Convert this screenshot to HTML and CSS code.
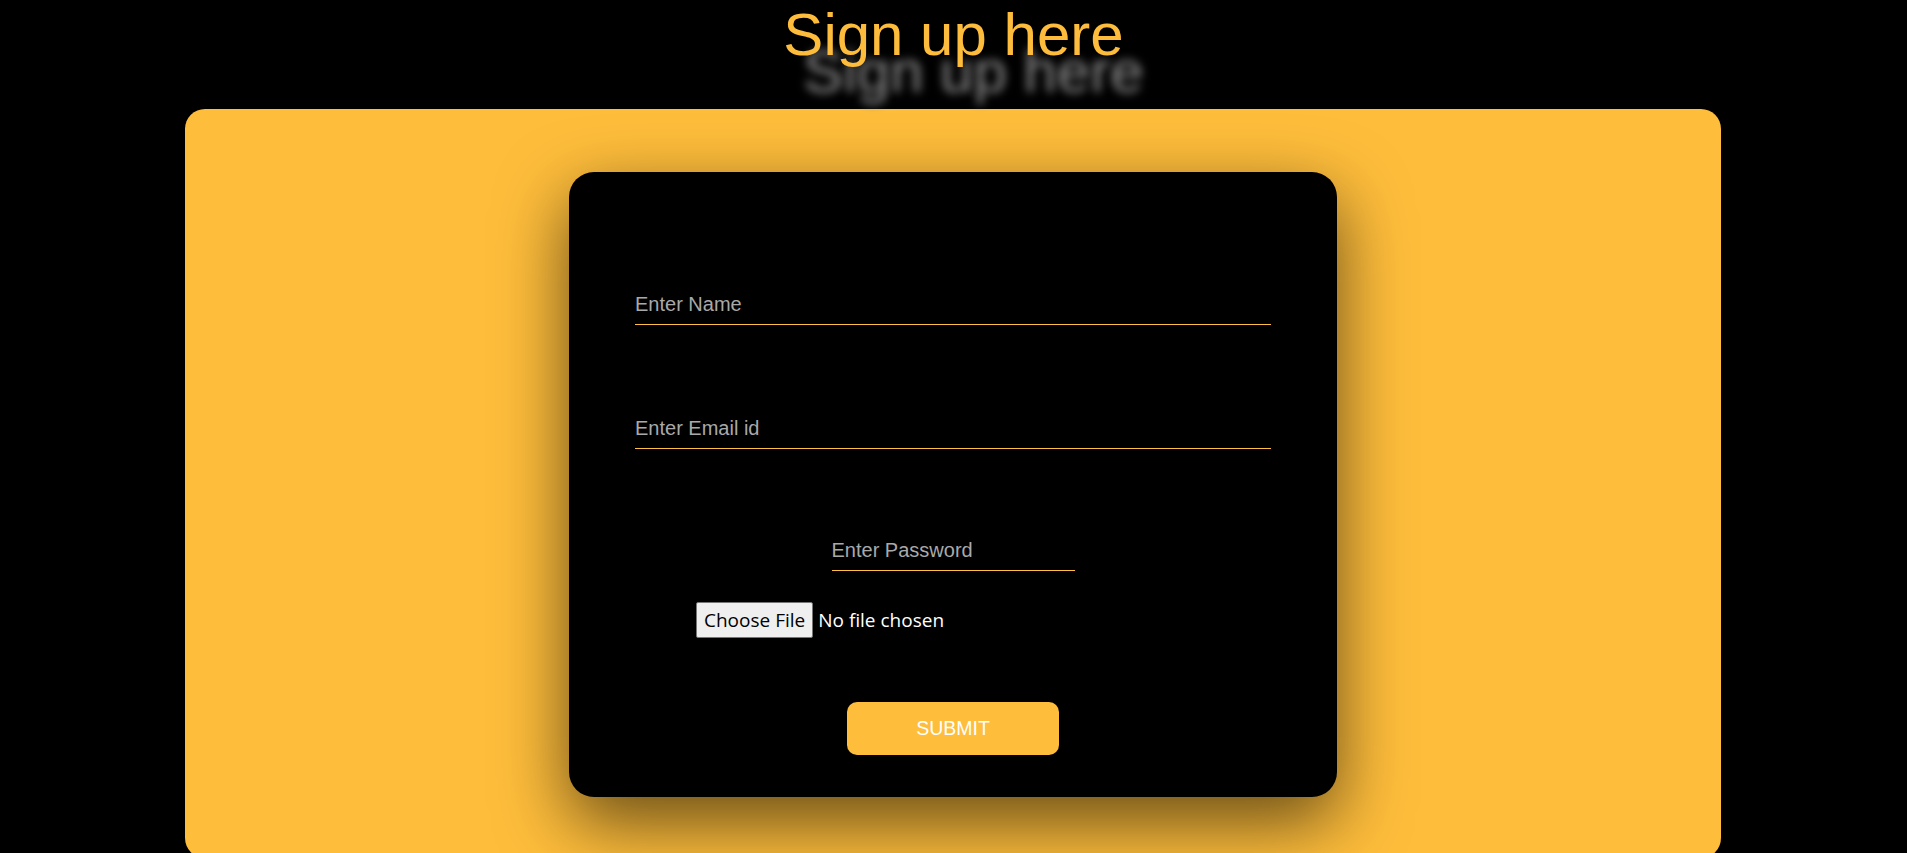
FILE: index.html
```html
<!DOCTYPE html>
<html lang="en">
<head>
<meta charset="utf-8">
<title>Sign up here</title>
<link rel="stylesheet" href="styles.css">
</head>
<body>
  <header class="header">
    <h1 class="title">Sign up here</h1>
  </header>
  <main class="panel">
    <form class="card">
      <input class="field field-wide field-name" type="text" placeholder="Enter Name">
      <input class="field field-wide field-email" type="email" placeholder="Enter Email id">
      <input class="field field-pass" type="password" placeholder="Enter Password">
      <label class="file">
        <input class="file-input" type="file">
        <span class="file-btn">Choose File</span>
        <span class="file-name">No file chosen</span>
      </label>
      <button class="submit" type="button">SUBMIT</button>
    </form>
  </main>
</body>
</html>
```

FILE: styles.css
```css
html, body {
  margin: 0;
  padding: 0;
  background: #000;
}

body {
  font-family: "Liberation Sans", Arial, sans-serif;
  height: 853px;
  overflow: hidden;
}

.header {
  height: 109px;
  padding-top: 5px;
  box-sizing: border-box;
}

.title {
  margin: 0;
  text-align: center;
  font-family: "Liberation Sans", Arial, sans-serif;
  font-weight: normal;
  font-size: 60px;
  line-height: 60px;
  color: #fdbc3b;
  text-shadow: 20px 37px 10px rgba(150, 150, 150, 0.95);
}

.panel {
  width: 1536px;
  margin: 0 0 0 185px;
  background: #febd3b;
  border-radius: 20px;
  padding: 63px 0 62px;
  box-sizing: border-box;
  height: 749px;
}

.card {
  width: 768px;
  height: 625px;
  margin: 0 auto;
  background: #000;
  border-radius: 25px;
  box-shadow: 0 25px 70px rgba(0, 0, 0, 0.6);
  box-sizing: border-box;
  padding-top: 113px;
  display: flex;
  flex-direction: column;
  align-items: center;
}

.field {
  display: block;
  background: transparent;
  border: none;
  border-bottom: 1px solid #ffc040;
  outline: none;
  color: #fff;
  font-family: "Liberation Sans", Arial, sans-serif;
  font-size: 20px;
  line-height: 23px;
  height: 40px;
  padding: 8px 0;
  box-sizing: border-box;
  border-radius: 0;
}

.field::placeholder {
  color: #a9a9a9;
}

.field-wide {
  width: 636px;
}

.field-email {
  margin-top: 84px;
}

.field-pass {
  width: 243px;
  margin-top: 82px;
}

.file {
  align-self: flex-start;
  margin: 31px 0 0 127px;
  display: inline-flex;
  align-items: center;
  font-family: "Open Sans", "Noto Sans", sans-serif;
  font-size: 19px;
}

.file-input {
  display: none;
}

.file-btn {
  display: inline-block;
  background: #efefef;
  color: #000;
  border: 1px solid #767676;
  border-radius: 2px;
  padding: 4px 7px;
  line-height: 26px;
  height: 36px;
  box-sizing: border-box;
  font-size: 19px;
}

.file-name {
  color: #fff;
  margin-left: 5px;
  line-height: 26px;
}

.submit {
  margin-top: 64px;
  width: 212px;
  height: 53px;
  border: none;
  border-radius: 10px;
  background: #febd3b;
  color: #fff;
  font-family: "Liberation Sans", Arial, sans-serif;
  font-size: 19.5px;
  padding: 0;
  cursor: pointer;
}
```
